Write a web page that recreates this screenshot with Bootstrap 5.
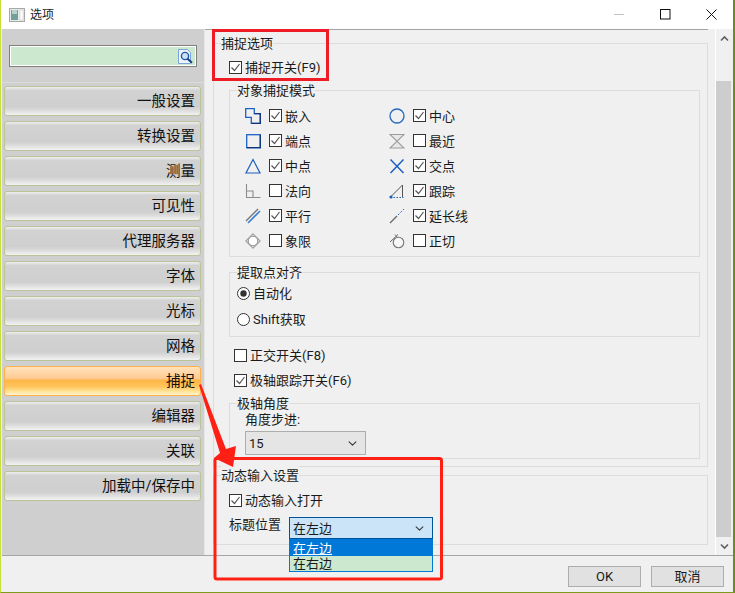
<!DOCTYPE html>
<html lang="zh-CN">
<head>
    <meta charset="UTF-8" />
    <meta name="viewport" content="width=device-width, initial-scale=1.0" />
    <title>选项</title>
    <link href="https://cdn.jsdelivr.net/npm/bootstrap@5.3.3/dist/css/bootstrap.min.css" rel="stylesheet" />
    <style>
        html, body { margin: 0; background: #f0f0f0; overflow: hidden; }
        body {
            width: 735px; height: 593px;
            font-family: Roboto, "Noto Sans CJK SC", sans-serif;
            font-size: 13px; line-height: 18px; color: #1a1a1a;
        }
        .win {
            position: relative;
            width: 735px; height: 593px;
            border-left: 1px solid #c9e03a;
            border-right: 2px solid #6f8a1e;
            border-bottom: 1px solid #7d9a1c;
        }
        /* title bar */
        .title-bar { height: 30px; background: #fff; font-size: 12px; padding-left: 8px; }
        .title-ico { width: 16px; height: 14px; margin-right: 5px; }
        .win-btns { margin-left: auto; padding-right: 16px; gap: 35px; }
        /* left side */
        .side { width: 203px; margin-left: 1px; background: #cfcfcf; border-right: 1px solid #e6e6e6; }
        .search-band { height: 54px; padding: 16px 7px 0 7px; border-bottom: 1px solid #dcdcdc; }
        .search-box { height: 22px; background: #cce8cf; border: 1px solid #808080; outline: 1px solid #fff; outline-offset: -2px; padding-right: 2px; }
        .side-list { padding: 3px 3px 0 2px; gap: 5px; }
        .side-btn {
            height: 30px; width: 197px; padding: 1px 5px 0 0;
            border: 1px solid #b9c498; border-radius: 3px;
            font-size: 14.5px; color: #111;
            background: linear-gradient(#efefef 0, #d2d2d2 12%, #cfcfcf 70%, #d6d6d6 78%, #f2f2f2 100%);
        }
        .side-btn.on {
            border-color: #ffb04a;
            background: linear-gradient(#ffe2bc 0, #ffcb94 40%, #ffb648 48%, #ffc45c 70%, #ffe59c 88%, #fff4cf 100%);
        }
        /* right side */
        .pane { width: 503px; border-top: 1px solid #a5a5a5; padding: 13px 0 0 8px; background: #f0f0f0; }
        .gutter { width: 8px; border-right: 1px solid #fff; }
        .grp { border: 1px solid #dcdcdc; }
        .grp-title { display: table; height: 20px; line-height: 20px; margin: -10px 0 -2px 7px; background: #f0f0f0; }
        .grp-main { width: 495px; height: 424px; padding-left: 15px; }
        .grp-main > .grp-title { margin-left: -8px; }
        .grp-sub { width: 471px; margin-top: 15px; }
        .grp-snap { margin-top: 14px; }
        .grp-angle { height: 56px; margin-top: 14px; }
        .grp-dyn { width: 495px; height: 70px; margin-top: 8px; }
        .snap-grid { display: grid; grid-template-columns: 144px 144px; grid-auto-rows: 25px; margin: 4px 0 3px 15px; }
        .snap-grid > div, .opt-line, .radio-a, .radio-b { padding-top: 2px; }
        .snap-ico { width: 16px; height: 16px; margin: -2px 8px 0 0; flex: none; }
        .form-check-input.opt-chk, .form-check-input.opt-radio {
            width: 13px; height: 13px; margin: -2px 3px 0 0; flex: none;
            border: 1px solid #333; box-shadow: none;
            background-color: #fff; background-size: 11px 11px;
        }
        .form-check-input.opt-chk { border-radius: 0; }
        .form-check-input.opt-chk:checked {
            background-image: url("data:image/svg+xml,%3csvg xmlns='http://www.w3.org/2000/svg' viewBox='0 0 11 11'%3e%3cpath fill='none' stroke='%23555' stroke-width='1.2' d='M1.5 5.5l3 3 5-6.5'/%3e%3c/svg%3e");
        }
        .form-check-input.opt-radio:checked {
            background-image: url("data:image/svg+xml,%3csvg xmlns='http://www.w3.org/2000/svg' viewBox='0 0 11 11'%3e%3ccircle cx='5.5' cy='5.5' r='3.2' fill='%23333'/%3e%3c/svg%3e");
        }
        .opt-line { height: 18px; }
        .opt-first { margin-top: 6px; }
        .opt-wide { margin: 9px 0 0 5px; }
        .opt-wide + .opt-wide { margin-top: 7px; }
        .opt-dyn { margin: 7px 0 0 15px; }
        .radio-a, .radio-b { height: 24px; margin-left: 7px; }
        .radio-b { margin-top: 2px; margin-bottom: 5px; }
        .angle-label { margin-left: 15px; height: 16px; line-height: 16px; }
        .pick {
            border-radius: 0; font-size: 13px; line-height: 18px; color: #1a1a1a;
            padding: 2px 20px 0 3px; box-shadow: none;
            background-size: 11px 9px; background-position: right 7px center;
        }
        .pick-angle { width: 121px; height: 24px; margin: 3px 0 0 15px; background-color: #e5e5e5; border: 1px solid #adadad; }
        .pick-title { width: 144px; height: 22px; background-color: #cce4f7; border: 1px solid #005499; }
        .pick-row { margin: 8px 0 0 15px; }
        .pick-label { margin-top: -1px; }
        .pick-wrap { position: relative; margin-left: 8px; }
        .pick-menu { position: absolute; left: 0; top: 22px; width: 144px; border: 1px solid #0078d7; line-height: 18px; }
        .pick-menu div { padding-left: 3px; height: 16px; }
        .pick-menu .hit { background: #0078d7; color: #fff; text-decoration: underline; text-underline-offset: 1px; }
        .pick-menu .idle { background: #cce8cf; height: 15px; line-height: 15px; }
        /* scrollbar */
        .vbar { width: 16px; background: #f0f0f0; }
        .vbar-end { height: 18px; }
        .vbar-gap { height: 34px; }
        .vbar-thumb { height: 456px; width: 15px; background: #cdcdcd; }
        /* footer */
        .foot { height: 37px; border-top: 1px solid #a5a5a5; padding: 10px 9px 0 0; gap: 10px; margin-left: 1px; }
        .foot-btn {
            width: 73px; height: 21px; padding: 0; border-radius: 0;
            font-size: 13px; line-height: 18px; color: #1a1a1a;
            background: #e1e1e1; border: 1px solid #adadad;
        }
        .marks { position: absolute; left: -1px; top: 0; pointer-events: none; }
    </style>
</head>
<body>
<div class="win d-flex flex-column">
    <div class="title-bar d-flex align-items-center">
        <svg class="title-ico" viewBox="0 0 16 14">
            <rect x=".5" y=".5" width="15" height="13" fill="#eaeaea" stroke="#a8a8a8"/>
            <rect x="2" y="2" width="7" height="10" fill="#6fa09a"/>
            <rect x="3" y="2" width="5" height="4" fill="#b5d3c8"/>
            <rect x="11" y="2" width="3" height="10" fill="#fff" stroke="#c4c4c4" stroke-width=".5"/>
        </svg>
        <span>选项</span>
        <div class="win-btns d-flex align-items-center">
            <svg width="11" height="11" viewBox="0 0 11 11"><path d="M0 5.5h10" stroke="#c2c2c2" fill="none"/></svg>
            <svg width="11" height="11" viewBox="0 0 11 11"><rect x=".5" y=".5" width="9.5" height="9.5" fill="none" stroke="#111"/></svg>
            <svg width="11" height="11" viewBox="0 0 11 11"><path d="M.5.5l10 10M10.5.5l-10 10" stroke="#111" fill="none"/></svg>
        </div>
    </div>

    <div class="d-flex flex-grow-1">
        <div class="side">
            <div class="search-band">
                <div class="search-box d-flex align-items-center justify-content-end">
                    <svg width="17" height="17" viewBox="0 0 17 17">
                        <path d="M1.5 1.5h9l3 3v11h-12z" fill="#eef5fc" stroke="#7ba4dc"/>
                        <circle cx="8" cy="8" r="3.6" fill="#cfe2f5" stroke="#1f57ad" stroke-width="1.4"/>
                        <path d="M10.5 10.8l4.5 4" stroke="#1c3f7c" stroke-width="2"/>
                    </svg>
                </div>
            </div>
            <div class="side-list d-flex flex-column">
                <div class="side-btn d-flex align-items-center justify-content-end">一般设置</div>
                <div class="side-btn d-flex align-items-center justify-content-end">转换设置</div>
                <div class="side-btn d-flex align-items-center justify-content-end">测量</div>
                <div class="side-btn d-flex align-items-center justify-content-end">可见性</div>
                <div class="side-btn d-flex align-items-center justify-content-end">代理服务器</div>
                <div class="side-btn d-flex align-items-center justify-content-end">字体</div>
                <div class="side-btn d-flex align-items-center justify-content-end">光标</div>
                <div class="side-btn d-flex align-items-center justify-content-end">网格</div>
                <div class="side-btn on d-flex align-items-center justify-content-end">捕捉</div>
                <div class="side-btn d-flex align-items-center justify-content-end">编辑器</div>
                <div class="side-btn d-flex align-items-center justify-content-end">关联</div>
                <div class="side-btn d-flex align-items-center justify-content-end">加载中/保存中</div>
            </div>
        </div>

        <div class="pane">
            <div class="grp grp-main">
                <div class="grp-title">捕捉选项</div>
                <label class="opt-line opt-first d-flex align-items-center">
                    <input class="form-check-input opt-chk" type="checkbox" checked>捕捉开关(F9)
                </label>

                <div class="grp grp-sub grp-snap">
                    <div class="grp-title">对象捕捉模式</div>
                    <div class="snap-grid">
                        <div class="d-flex align-items-center">
                            <svg class="snap-ico" viewBox="0 0 16 16"><path d="M.7.7h8.6v5h6v9.6h-9v-6h-5.6z" fill="none" stroke="#1c62c4" stroke-width="1.3"/><path d="M9.3 5.7h6v9.6h-9" fill="none" stroke="#10357c" stroke-width="1.3"/></svg>
                            <input class="form-check-input opt-chk" type="checkbox" checked>嵌入
                        </div>
                        <div class="d-flex align-items-center">
                            <svg class="snap-ico" viewBox="0 0 16 16"><circle cx="8" cy="8" r="7" fill="none" stroke="#2468c0" stroke-width="1.3"/></svg>
                            <input class="form-check-input opt-chk" type="checkbox" checked>中心
                        </div>
                        <div class="d-flex align-items-center">
                            <svg class="snap-ico" viewBox="0 0 16 16"><rect x="1.7" y="1.7" width="13.6" height="13" fill="none" stroke="#1c62c4" stroke-width="1.3"/><path d="M15.3 1.7v13h-13.6" fill="none" stroke="#10357c" stroke-width="1.3"/></svg>
                            <input class="form-check-input opt-chk" type="checkbox" checked>端点
                        </div>
                        <div class="d-flex align-items-center">
                            <svg class="snap-ico" viewBox="0 0 16 16"><path d="M1 1.5h14L1 15h14z" fill="#e8e8e8" stroke="#9c9c9c" stroke-width="1.1"/></svg>
                            <input class="form-check-input opt-chk" type="checkbox">最近
                        </div>
                        <div class="d-flex align-items-center">
                            <svg class="snap-ico" viewBox="0 0 16 16"><path d="M8 1.5 1 15h14z" fill="none" stroke="#1c5fc0" stroke-width="1.2"/></svg>
                            <input class="form-check-input opt-chk" type="checkbox" checked>中点
                        </div>
                        <div class="d-flex align-items-center">
                            <svg class="snap-ico" viewBox="0 0 16 16"><path d="M1.5 1.5 14.5 15M14.5 1.5 1.5 15" fill="none" stroke="#1c5fc0" stroke-width="1.5"/></svg>
                            <input class="form-check-input opt-chk" type="checkbox" checked>交点
                        </div>
                        <div class="d-flex align-items-center">
                            <svg class="snap-ico" viewBox="0 0 16 16"><path d="M1.5 1v13.5h14M1.5 8H8v6.5" fill="none" stroke="#8c8c8c" stroke-width="1.1"/></svg>
                            <input class="form-check-input opt-chk" type="checkbox">法向
                        </div>
                        <div class="d-flex align-items-center">
                            <svg class="snap-ico" viewBox="0 0 16 16"><path d="M2 13.5 13.5 2v12.5" fill="none" stroke="#555" stroke-width="1"/><path d="M1.5 14.5h13" fill="none" stroke="#1c5fc0" stroke-dasharray="1.5 1.5"/><circle cx="2" cy="14" r="1.6" fill="#1c5fc0"/></svg>
                            <input class="form-check-input opt-chk" type="checkbox" checked>跟踪
                        </div>
                        <div class="d-flex align-items-center">
                            <svg class="snap-ico" viewBox="0 0 16 16"><path d="M1 13 13 1" fill="none" stroke="#777" stroke-width="1.4"/><path d="M3 15 15 3" fill="none" stroke="#3b7fd6" stroke-width="1.6"/></svg>
                            <input class="form-check-input opt-chk" type="checkbox" checked>平行
                        </div>
                        <div class="d-flex align-items-center">
                            <svg class="snap-ico" viewBox="0 0 16 16"><path d="M1 15 8 8" fill="none" stroke="#666" stroke-width="1.2"/><path d="M9 7 15 1" fill="none" stroke="#2b6fce" stroke-dasharray="2 1.5"/></svg>
                            <input class="form-check-input opt-chk" type="checkbox" checked>延长线
                        </div>
                        <div class="d-flex align-items-center">
                            <svg class="snap-ico" viewBox="0 0 16 16"><circle cx="8" cy="8" r="4.8" fill="#fff" stroke="#8c8c8c"/><path d="M8 .8 15.2 8 8 15.2 .8 8z" fill="none" stroke="#a2a2a2" stroke-width="1.1"/></svg>
                            <input class="form-check-input opt-chk" type="checkbox">象限
                        </div>
                        <div class="d-flex align-items-center">
                            <svg class="snap-ico" viewBox="0 0 16 16"><circle cx="9.5" cy="9.5" r="5.3" fill="#f7f7f7" stroke="#777" stroke-width="1.1"/><path d="M1 9 9 1.5" fill="none" stroke="#666"/><path d="M6 1.5l2.5 3" fill="none" stroke="#777"/></svg>
                            <input class="form-check-input opt-chk" type="checkbox">正切
                        </div>
                    </div>
                </div>

                <div class="grp grp-sub">
                    <div class="grp-title">提取点对齐</div>
                    <label class="radio-a d-flex align-items-center">
                        <input class="form-check-input opt-radio" type="radio" name="pickAlign" checked>自动化
                    </label>
                    <label class="radio-b d-flex align-items-center">
                        <input class="form-check-input opt-radio" type="radio" name="pickAlign">Shift获取
                    </label>
                </div>

                <label class="opt-line opt-wide d-flex align-items-center">
                    <input class="form-check-input opt-chk" type="checkbox">正交开关(F8)
                </label>
                <label class="opt-line opt-wide d-flex align-items-center">
                    <input class="form-check-input opt-chk" type="checkbox" checked>极轴跟踪开关(F6)
                </label>

                <div class="grp grp-sub grp-angle">
                    <div class="grp-title">极轴角度</div>
                    <div class="angle-label">角度步进:</div>
                    <select class="form-select pick pick-angle"><option>15</option></select>
                </div>
            </div>

            <div class="grp grp-dyn">
                <div class="grp-title">动态输入设置</div>
                <label class="opt-line opt-dyn d-flex align-items-center">
                    <input class="form-check-input opt-chk" type="checkbox" checked>动态输入打开
                </label>
                <div class="pick-row d-flex">
                    <span class="pick-label">标题位置</span>
                    <div class="pick-wrap">
                        <select class="form-select pick pick-title"><option>在左边</option></select>
                        <div class="pick-menu">
                            <div class="hit">在左边</div>
                            <div class="idle">在右边</div>
                        </div>
                    </div>
                </div>
            </div>
        </div>

        <div class="gutter"></div>

        <div class="vbar d-flex flex-column">
            <div class="vbar-end d-flex align-items-center justify-content-center">
                <svg width="9" height="7" viewBox="0 0 9 7"><path d="M1 5.5 4.5 2 8 5.5" fill="none" stroke="#606060" stroke-width="1.6"/></svg>
            </div>
            <div class="vbar-gap"></div>
            <div class="vbar-thumb"></div>
            <div class="vbar-end d-flex align-items-center justify-content-center">
                <svg width="9" height="7" viewBox="0 0 9 7"><path d="M1 1.5 4.5 5 8 1.5" fill="none" stroke="#606060" stroke-width="1.6"/></svg>
            </div>
        </div>
    </div>

    <div class="foot d-flex justify-content-end">
        <button type="button" class="btn foot-btn">OK</button>
        <button type="button" class="btn foot-btn">取消</button>
    </div>

    <!-- red marks drawn on top of the shot -->
    <svg class="marks" width="735" height="593" viewBox="0 0 735 593">
        <rect x="213.5" y="30.5" width="114" height="49" fill="none" stroke="#ee1c25" stroke-width="3"/>
        <rect x="215" y="458.5" width="226.5" height="120.5" rx="2" fill="none" stroke="#ff2015" stroke-width="3"/>
        <path d="M199 385 201 384 226 449 236 446 233 467 214 458 220 453z" fill="#ff2015"/>
    </svg>
</div>
<script src="https://cdn.jsdelivr.net/npm/bootstrap@5.3.3/dist/js/bootstrap.bundle.min.js"></script>
</body>
</html>
